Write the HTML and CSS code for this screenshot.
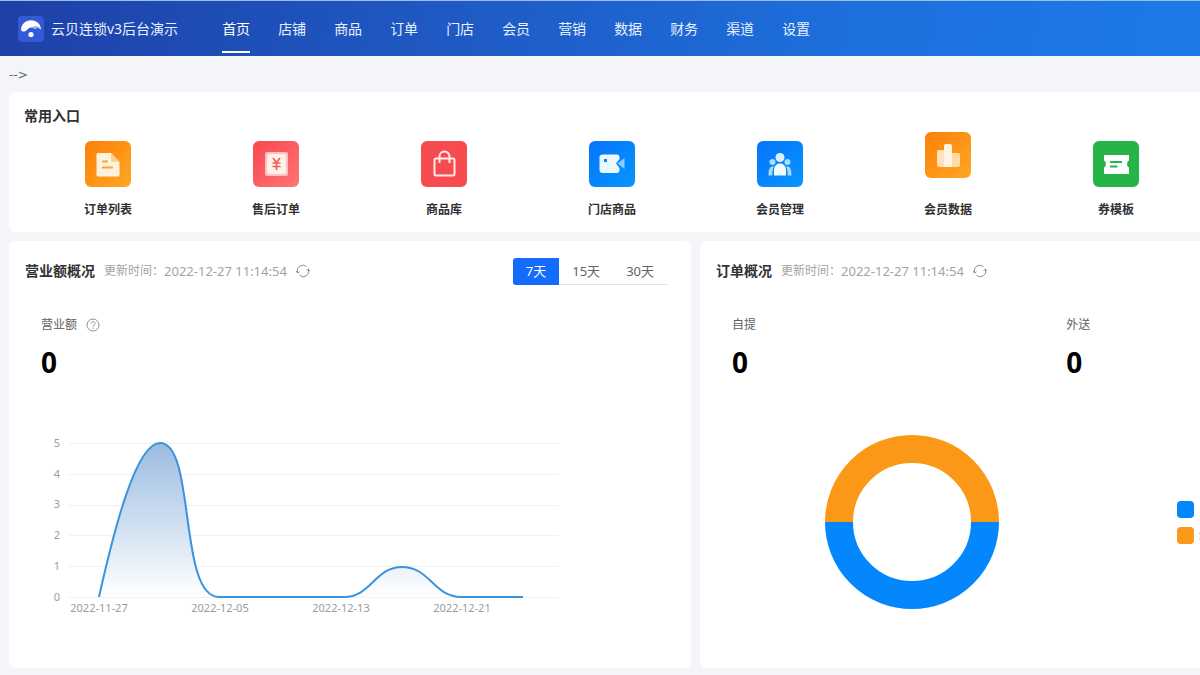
FILE: index.html
```html
<!DOCTYPE html>
<html lang="zh-CN">
<head>
<meta charset="utf-8">
<meta name="viewport" content="width=device-width, initial-scale=1">
<title>云贝连锁v3后台演示</title>
<link rel="stylesheet" href="styles.css">
</head>
<body>
<header class="topbar">
  <div class="brand">
    <svg class="brand-logo" viewBox="0 0 26 26" aria-hidden="true">
      <rect width="26" height="26" rx="4" fill="#3358d8"/>
      <path d="M3 14C3 8.500 7.500 4.300 13 4.300s9.700 3.700 10 9.200c-2-2-4.500-2-6.200-.7-1-.9-2.300-1.300-3.600-1.300-3.200 0-4.200 3.600-6.700 4-1.500.2-2.700-.3-3.500-1.500z" fill="#fff"/>
      <path d="M14 11.400c3-2.200 7-1.600 9 2.100-2-2-4.500-2-6.200-.7z" fill="#9db2f2"/>
      <circle cx="13" cy="18.500" r="2.600" fill="#fff"/>
    </svg>
    <span>云贝连锁v3后台演示</span>
  </div>
  <nav class="nav">
    <a class="nav-link active" href="#">首页</a>
    <a class="nav-link" href="#">店铺</a>
    <a class="nav-link" href="#">商品</a>
    <a class="nav-link" href="#">订单</a>
    <a class="nav-link" href="#">门店</a>
    <a class="nav-link" href="#">会员</a>
    <a class="nav-link" href="#">营销</a>
    <a class="nav-link" href="#">数据</a>
    <a class="nav-link" href="#">财务</a>
    <a class="nav-link" href="#">渠道</a>
    <a class="nav-link" href="#">设置</a>
  </nav>
</header>
<main class="page">
  <div class="crumb">--&gt;</div>

  <section class="card shortcuts">
    <h2 class="title">常用入口</h2>
    <div class="shortcut-grid">
      <a class="shortcut" href="#">
        <svg class="tile orange" viewBox="0 0 46 46" aria-hidden="true">
          <path d="M13 12h13l8.500 9v13a1.500 1.500 0 0 1-1.500 1.500H13a1.500 1.500 0 0 1-1.500-1.500V13.500A1.500 1.500 0 0 1 13 12z" fill="#fff2dc"/>
          <path d="M26 12l8.500 9H28a2 2 0 0 1-2-2z" fill="#ffd08c"/>
          <path d="M17 20.500h6M17 26.500h11" stroke="#f7a445" stroke-width="2"/>
        </svg>
        <span>订单列表</span>
      </a>
      <a class="shortcut" href="#">
        <svg class="tile pink" viewBox="0 0 46 46" aria-hidden="true">
          <rect x="12" y="11" width="23" height="24" rx="2" fill="#ffc0bd"/>
          <rect x="14" y="13" width="19" height="20" rx="2" fill="#fff0ea"/>
          <path d="M20 17l3.500 4.500L27 17M19.500 22h8M19.500 25.500h8M23.500 21.500V29" fill="none" stroke="#f0605f" stroke-width="1.700"/>
        </svg>
        <span>售后订单</span>
      </a>
      <a class="shortcut" href="#">
        <svg class="tile red" viewBox="0 0 46 46" aria-hidden="true">
          <rect x="13.500" y="17.500" width="20" height="17" rx="1.500" fill="none" stroke="#ffe9e9" stroke-width="2"/>
          <path d="M18.500 22v-6.500a5 5 0 0 1 10 0V22" fill="none" stroke="#ffe9e9" stroke-width="2"/>
        </svg>
        <span>商品库</span>
      </a>
      <a class="shortcut" href="#">
        <svg class="tile blue" viewBox="0 0 46 46" aria-hidden="true">
          <path d="M13.500 13.500H28c1.500 0 2.500 1 2.500 2.500v2l-3.500 4.500 3.500 4.500v2c0 1.800-1 3-2.500 3H13.500c-1.800 0-3-1.200-3-3V16c0-1.500 1.200-2.500 3-2.500z" fill="#ecf8ff"/>
          <rect x="15" y="18" width="3" height="3" fill="#0786ff"/>
          <path d="M28.500 22.500l7-5.500v11z" fill="#8bc9ff"/>
        </svg>
        <span>门店商品</span>
      </a>
      <a class="shortcut" href="#">
        <svg class="tile blue" viewBox="0 0 46 46" aria-hidden="true">
          <g fill="#a9dbff">
            <circle cx="15.500" cy="21" r="3"/><circle cx="30.500" cy="21" r="3"/>
            <path d="M11.500 34.500c0-5 .8-9 4-9h1.500c-1.500 2.500-1.700 5.500-1.700 9zM34.500 34.500c0-5-.8-9-4-9H29c1.500 2.500 1.700 5.500 1.700 9z"/>
          </g>
          <circle cx="23" cy="16.500" r="4.500" fill="#d9f1ff"/>
          <path d="M17 34.500v-5c0-4.500 2.500-7 6-7s6 2.500 6 7v5z" fill="#f2fbff"/>
        </svg>
        <span>会员管理</span>
      </a>
      <a class="shortcut" href="#">
        <svg class="tile orange raised" viewBox="0 0 46 46" aria-hidden="true">
          <path d="M12 20a2 2 0 0 1 2-2h5v17h-5a2 2 0 0 1-2-2z" fill="#ffe2bd"/>
          <path d="M19 14a2 2 0 0 1 2-2h4a2 2 0 0 1 2 2v21h-8z" fill="#fff3e2"/>
          <path d="M27 21h6a2 2 0 0 1 2 2v10a2 2 0 0 1-2 2h-6z" fill="#ffdaa9"/>
        </svg>
        <span>会员数据</span>
      </a>
      <a class="shortcut" href="#">
        <svg class="tile green" viewBox="0 0 46 46" aria-hidden="true">
          <path d="M11 14h25v5.500c-2.500.5-2.500 6.500 0 7V33H11v-6.500c2.500-.5 2.500-6.500 0-7z" fill="#fff"/>
          <path d="M17 21h12M17 25.500h7.500" stroke="#25b546" stroke-width="2"/>
        </svg>
        <span>券模板</span>
      </a>
    </div>
  </section>

  <div class="panels">
    <section class="card panel">
      <div class="panel-head">
        <h2 class="title">营业额概况</h2>
        <span class="updated">更新时间：<time>2022-12-27 11:14:54</time></span>
        <button class="icon-btn" type="button" aria-label="刷新">
          <svg viewBox="0 0 14 14" aria-hidden="true"><path d="M1.500 8.500A5.600 5.600 0 0 1 10.500 2.600M12.500 5.500A5.600 5.600 0 0 1 3.500 11.400M.3 7l1.200 2 2-1.200M13.700 7l-1.200-2-2 1.200"/></svg>
        </button>
        <div class="tabs">
          <button class="tab active" type="button">7天</button>
          <button class="tab" type="button">15天</button>
          <button class="tab" type="button">30天</button>
        </div>
      </div>
      <div class="stats">
        <div class="stat">
          <div class="stat-label">营业额
            <svg class="help" viewBox="0 0 14 14" aria-hidden="true"><circle cx="7" cy="7" r="6"/><path d="M5 5.500C5 3 9 3 9 5.400 9 6.900 7 6.800 7 8.500M7 9.600v1.200"/></svg>
          </div>
          <div class="stat-value">0</div>
        </div>
      </div>
      <svg class="line-chart" viewBox="0 0 682 190" role="img" aria-label="营业额趋势">
        <defs>
          <linearGradient id="area" gradientUnits="userSpaceOnUse" x1="0" y1="13" x2="0" y2="167">
            <stop offset="0" stop-color="#9bbce0"/>
            <stop offset="1" stop-color="#ffffff"/>
          </linearGradient>
        </defs>
        <path class="grid" d="M60 13.500H550M60 44.500H550M60 75.500H550M60 105.500H550M60 136.500H550M60 167.500H550"/>
        <path fill="url(#area)" d="M90 167C105 100 127 13 151 13C187 13 169 167 210 167H335C362 167 366 137 393 137C421 137 425 167 452 167H514"/>
        <path class="curve" d="M90 167C105 100 127 13 151 13C187 13 169 167 210 167H335C362 167 366 137 393 137C421 137 425 167 452 167H514"/>
        <g class="axis" text-anchor="end">
          <text x="51" y="17">5</text><text x="51" y="48">4</text><text x="51" y="78">3</text>
          <text x="51" y="109">2</text><text x="51" y="140">1</text><text x="51" y="171">0</text>
        </g>
        <g class="axis" text-anchor="middle">
          <text x="90" y="182">2022-11-27</text><text x="211" y="182">2022-12-05</text>
          <text x="332" y="182">2022-12-13</text><text x="453" y="182">2022-12-21</text>
        </g>
      </svg>
    </section>

    <section class="card panel">
      <div class="panel-head">
        <h2 class="title">订单概况</h2>
        <span class="updated">更新时间：<time>2022-12-27 11:14:54</time></span>
        <button class="icon-btn" type="button" aria-label="刷新">
          <svg viewBox="0 0 14 14" aria-hidden="true"><path d="M1.500 8.500A5.600 5.600 0 0 1 10.500 2.600M12.500 5.500A5.600 5.600 0 0 1 3.500 11.400M.3 7l1.200 2 2-1.200M13.700 7l-1.200-2-2 1.200"/></svg>
        </button>
      </div>
      <div class="stats two">
        <div class="stat"><div class="stat-label">自提</div><div class="stat-value">0</div></div>
        <div class="stat"><div class="stat-label">外送</div><div class="stat-value">0</div></div>
      </div>
      <div class="donut-row">
        <svg class="donut" viewBox="0 0 174 174" role="img" aria-label="订单占比">
          <path d="M14 87a73 73 0 0 1 146 0" stroke="#fc9818"/>
          <path d="M14 87a73 73 0 0 0 146 0" stroke="#0486fc"/>
        </svg>
        <ul class="legend">
          <li><i class="swatch swatch-blue"></i>自提</li>
          <li><i class="swatch swatch-orange"></i>外送</li>
        </ul>
      </div>
    </section>
  </div>
</main>
</body>
</html>
```

FILE: styles.css
```css
* { box-sizing: border-box; }

body {
  margin: 0;
  background: #f4f5f8;
  color: #303133;
  font-family: "Noto Sans", "Noto Sans CJK SC", sans-serif;
  font-size: 12px;
  line-height: 18px;
}

a { color: inherit; text-decoration: none; }
button { padding: 0; border: 0; background: none; color: inherit; font: inherit; }

.topbar {
  display: flex;
  gap: 44px;
  height: 56px;
  padding-left: 18px;
  border-top: 1px solid #9dbcec;
  background: linear-gradient(100deg, #1e40a8 0%, #1f5ac4 38%, #1d70de 72%, #1b7ae8 100%);
  color: #e8f1ff;
  font-size: 14px;
  line-height: 20px;
}

.brand { display: flex; align-items: center; gap: 7px; white-space: nowrap; }
.brand-logo { width: 26px; height: 26px; }

.nav { display: flex; gap: 28px; }
.nav-link {
  display: flex;
  align-items: center;
  margin-bottom: 3px;
  padding-top: 5px;
  border-bottom: 2px solid transparent;
  white-space: nowrap;
}
.nav-link.active { border-bottom-color: #fff; color: #fff; }

.page { padding: 10px 0 7px 9px; }
.crumb { margin-bottom: 8px; color: #666; font-family: "DejaVu Sans", sans-serif; }

.card { border-radius: 6px; background: #fff; }
.title { margin: 0; font-size: 14px; font-weight: 700; line-height: 20px; white-space: nowrap; }

.shortcuts {
  margin-bottom: 9px;
  padding: 14px 0 13px 15px;
  border-radius: 6px 0 0 6px;
}
.shortcut-grid { display: grid; grid-template-columns: repeat(7, 1fr); margin-top: 6px; }
.shortcut {
  display: flex;
  flex-direction: column;
  align-items: center;
  justify-content: flex-end;
  gap: 14px;
  font-weight: 700;
}
.tile { width: 46px; height: 46px; border-radius: 6px; }
.tile.raised { margin-bottom: 9px; }
.orange { background: linear-gradient(135deg, #fd7f08, #fea825); }
.pink { background: linear-gradient(135deg, #fb4650, #fd7672); }
.red { background: #f64b4f; }
.blue { background: linear-gradient(135deg, #0674fb, #0596ff); }
.green { background: #25b546; }

.panels { display: grid; grid-template-columns: 682fr 500fr; gap: 9px; }
.panel { min-width: 0; padding: 16px 0 48px; overflow: hidden; }
.panel:last-child { border-radius: 6px 0 0 6px; }
.panel-head { display: flex; align-items: center; height: 28px; padding: 0 24px 0 16px; }
.updated {
  display: flex;
  margin-left: 9px;
  color: #a2a3a6;
  white-space: nowrap;
}
.updated time { font-size: 13px; }

.icon-btn { width: 14px; height: 14px; margin-left: 9px; }
.icon-btn svg, .help {
  display: block;
  width: 14px;
  height: 14px;
  fill: none;
  stroke: #8d8f93;
  stroke-width: 1;
}

.tabs { display: flex; margin-left: auto; color: #606266; font-size: 13px; }
.tab { height: 27px; padding: 0 13px; border-bottom: 1px solid #dfe1e6; white-space: nowrap; }
.tab.active { border-color: #146cfb; border-radius: 3px 0 0 3px; background: #146cfb; color: #fff; }

.stats { margin-top: 31px; padding-left: 32px; }
.stats.two { display: grid; grid-template-columns: 5fr 2fr; }
.stat-label { display: flex; align-items: center; gap: 9px; color: #606266; }
.stat-value { margin-top: 10px; color: #000; font-size: 28px; font-weight: 700; line-height: 36px; }

.line-chart { display: block; width: 100%; margin-top: 50px; }
.line-chart .grid { stroke: #f0f1f3; stroke-width: 1; }
.curve { fill: none; stroke: #3a93df; stroke-width: 2; }
.axis { fill: #9a9ca1; font-size: 11px; }

.donut-row { display: flex; align-items: center; margin-top: 55px; padding-left: 25%; }
.donut { flex: none; width: 174px; height: 174px; fill: none; stroke-width: 28; }
.legend {
  display: grid;
  gap: 8px;
  margin: 0 0 0 178px;
  padding: 0;
  list-style: none;
}
.legend li { display: flex; align-items: center; gap: 5px; white-space: nowrap; }
.swatch { width: 17px; height: 17px; border-radius: 4px; }
.swatch-blue { background: #0486fc; }
.swatch-orange { background: #fc9818; }
```
